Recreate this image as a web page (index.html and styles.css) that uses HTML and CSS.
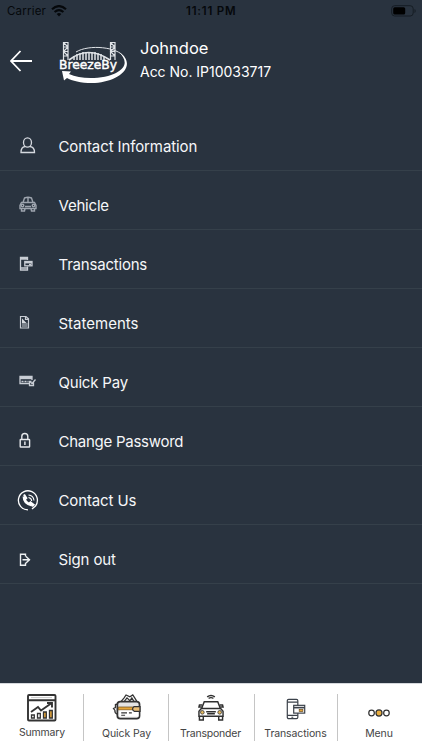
FILE: index.html
```html
<!DOCTYPE html>
<html lang="en">
<head>
<meta charset="utf-8">
<title>BreezeBy</title>
<link rel="stylesheet" href="styles.css">
</head>
<body>
<div class="app">
  <div class="status">
    <span class="carrier">Carrier</span>
    <svg class="wifi" width="16" height="12" viewBox="0 0 16 12"><g fill="none" stroke="#05080b" stroke-width="2.2"><path d="M1 4.2Q8-2 15 4.2"/><path d="M3.6 7Q8 3.2 12.4 7"/></g><path d="M5.7 9Q8 7 10.3 9L8 11.5Z" fill="#05080b"/></svg>
    <span class="time">11:11 PM</span>
    <svg class="battery" width="25" height="12" viewBox="0 0 25 12"><rect x=".7" y=".7" width="21.5" height="10.3" rx="3" fill="none" stroke="#161d24"/><rect x="2.2" y="2.2" width="12" height="7.3" rx="1.5" fill="#000"/><path d="M23.5 4v4q1.2-.5 1.2-2t-1.2-2" fill="#161d24"/></svg>
  </div>
  <header class="header">
    <svg class="back" width="23" height="22" viewBox="0 0 23 22"><path d="M10.5 1 1 11l9.500 10M1 11h21" fill="none" stroke="#fff" stroke-width="1.8"/></svg>
    <svg class="logo" width="70" height="46" viewBox="0 0 70 46">
      <g fill="none" stroke="#dfe3e7" stroke-width="1.200">
        <path d="M4.500 2v18M9 2v18M4 2.500h5.500M4 7h5.500M4 11.500h5.500M4 16h5.500M4.500 2.500l4.500 4.500-4.500 4.500 4.500 4.500M51.500 2v18M56 2v18M51 2.500h5.500M51 7h5.500M51 11.500h5.500M51 16h5.500M51.500 2.500l4.500 4.500-4.500 4.500 4.500 4.500"/>
        <path d="M10 20Q29 5 51 20" stroke-width="1.700"/>
        <path d="M15 16v4M18 14v6M21 13v7M24 12v8M27 12v8M30 12v8M33 12v8M36 12v8M39 13v7M42 14v6M45 16v4" stroke-width="1.500"/>
        <path d="M17 12C30 4 59 7 65 17" stroke-width="1"/>
      </g>
      <path d="M60 12C79 25 61 41.500 36 43 24 43.500 13 41 8 38L5 40.500 3 31 12 31.500 10 34C23 40.500 47 38.500 57 33 68 27.500 68 20 60 12Z" fill="#fff"/>
      <text class="logo-text" x="0" y="28.500" textLength="58" lengthAdjust="spacingAndGlyphs">BreezeBy</text>
    </svg>
    <div class="account"><div class="name">Johndoe</div><div class="number">Acc No. IP10033717</div></div>
  </header>
  <nav class="menu">
    <a class="row"><svg class="icon" viewBox="0 0 24 24"><g fill="none" stroke="#d5d9df" stroke-width="1.300"><ellipse cx="11.500" cy="8.500" rx="4" ry="4.600"/><path d="M9 12.500q-4 .5-4 6h13.500q0-5.500-4.500-6"/></g></svg><span class="contact">Contact Information</span></a>
    <a class="row"><svg class="icon" viewBox="0 0 24 24"><g fill="none" stroke="#9da4ae" stroke-width="1.400"><path d="M7 9.500 8.500 5q3.500-1.500 7 0L17 9.500M12 4v5.500M5.500 9.500h13l1.500 3v3H4v-3ZM9 13.500h6"/><circle cx="6.500" cy="12.500" r="1.300"/><circle cx="17.500" cy="12.500" r="1.300"/><path d="M5.500 15.500v2.500h3l.5-2.500M15 15.500l.5 2.500h3v-2.500"/></g></svg><span class="vehicle">Vehicle</span></a>
    <a class="row"><svg class="icon" viewBox="0 0 24 24"><g fill="none" stroke="#c8cdd4" stroke-width="1.300"><path d="M11.500 8V5.500h-7v12.500h7v-3.500M4.500 7h7M4.500 16h7"/><rect x="8.800" y="9.500" width="7.200" height="4.300"/><path d="M9 10.500h7" stroke-width="1.800"/><path d="M13 12.500h2"/></g></svg><span class="transactions">Transactions</span></a>
    <a class="row"><svg class="icon" viewBox="0 0 24 24"><path d="M4.500 5.500h5.500l2.500 2.300v9.200h-8ZM9.500 5.500v2.800h3M6 15h5.500M6 13h5.500" fill="none" stroke="#c8cdd4" stroke-width="1.200"/><path d="m6 7.500 4.500 4.500H6Z" fill="#d7dbe0"/></svg><span class="statements">Statements</span></a>
    <a class="row"><svg class="icon" viewBox="0 0 24 24"><g fill="none" stroke="#c8cdd4" stroke-width="1.300"><path d="M13 13.500H4V6.500h12V10" /><path d="M4 8h12" stroke-width="2.400"/><path d="M5.500 11.500h7" stroke-dasharray="2 1"/><path d="M17.500 12v3.500h-4v-4h2M14.500 12l1.500 1.500 3.500-4"/></g></svg><span class="quick">Quick Pay</span></a>
    <a class="row"><svg class="icon" viewBox="0 0 24 24"><g fill="none" stroke="#e5e8eb" stroke-width="1.400"><path d="M5.800 10.500V7.500a3 3 0 0 1 6 0v3"/><rect x="4.200" y="10.500" width="9.400" height="7.500" rx=".5"/><path d="M8.900 12.500v3.500" stroke-width="1.500"/></g></svg><span class="password">Change Password</span></a>
    <a class="row"><svg class="icon low" viewBox="0 0 24 24"><g fill="none" stroke="#fff"><path d="M12 20.800A9.500 9.500 0 1 1 19.500 17L16 20" stroke-width="1.300"/><path d="M8 7.500q0 7 8 8.500" stroke-width="2.800"/><path d="m8 5.500 2.200 3.500-1.500 1.500M13 15l1.500-1.500 3 2.300-1.500 1.500" stroke-width="2.200"/><path d="M12.500 8.500q3 .5 3.200 3.500M12.500 6q5 .5 5.500 5.500" stroke-width="1.100"/></g></svg><span class="contact-us">Contact Us</span></a>
    <a class="row"><svg class="icon low" viewBox="0 0 24 24"><path d="M9.500 8.500V6.200h-5v11h5v-2.500M6.500 11.700h7.500M10 8.500l3.500 3.200-3.500 3.300" fill="none" stroke="#edf0f2" stroke-width="1.400"/></svg><span class="signout">Sign out</span></a>
  </nav>
  <footer class="tabs">
    <a class="tab summary"><svg width="30" height="28" viewBox="0 0 30 28"><g fill="none" stroke="#333" stroke-width="1.900"><rect x="1" y="1" width="27.500" height="25.500" rx="1" fill="#fff"/><path d="M1 6.200h27.500M4 18l7-5 3 3.500 10-7M20 9h5v4.500"/></g><path d="M4 3.600h21" stroke="#c9c9c9"/><g fill="#fff" stroke="#333" stroke-width="1.300"><path d="M4.500 21h2.800v3H4.500zM10.500 19.500h2.800V24h-2.800z"/><path d="M16.500 18h2.800v6h-2.800zM22.500 16.500h2.800V24h-2.800z" fill="#e5a63b"/></g></svg><span>Summary</span></a>
    <a class="tab quickpay"><svg width="30" height="28" viewBox="0 0 30 28"><g fill="#fff" stroke="#333" stroke-width="1.300"><path d="M5 21Q2 20 2.500 17L1 15l2-1v-3l4-1 5-6 2-3 4 2 3-2 2 3 3 5"/><path d="M12 8l3-4 3 3 2-3 3 5"/><rect x="5" y="8" width="23" height="17.500" rx="3" fill="#e4e4e4" stroke-width="1.800"/><path d="M6 13.500h22v3H6z" fill="#e5a63b" stroke="#72511f" stroke-width=".8"/><path d="M7 17h20v6.500H7z" stroke="none"/><path d="M28.500 13h-6q-3.500 2.500 0 5h6z" fill="#e9bd75"/><path d="M9 19.500h6M9 22h4M17 19.500h3" stroke-width="1.200"/></g></svg><span>Quick Pay</span></a>
    <a class="tab transponder"><svg width="30" height="28" viewBox="0 0 30 28"><g fill="none" stroke="#303030" stroke-width="1.500"><path d="M11 3q4-3 8 0M12.500 4.500q2.500-1.500 5 0" stroke-width="1.400"/><path d="m5.500 14.500 2.500-6.500h14l2.500 6.500M2.500 23v-5l2.500-3h20l2.500 3v5Z"/><path d="M5.500 13.500H2.500l.5-2h3M24.500 13.500h3l-.5-2h-3M3 23v4h4v-4M23 23v4h4v-4M10 18.500h10M11 20.500h8"/><g fill="#e4b95f" stroke-width=".8"><circle cx="6" cy="19" r="1.900"/><circle cx="24" cy="19" r="1.900"/></g></g></svg><span>Transponder</span></a>
    <a class="tab transfer"><svg width="22" height="24" viewBox="0 0 22 24"><g fill="#fff" stroke="#3b414a" stroke-width="1.300"><rect x="1.500" y="1.500" width="11.500" height="21" rx="1.500"/><path d="M1.500 4.500H13M1.500 19H13M6 21h2"/><rect x="8.500" y="8" width="12" height="8.500"/><path d="M8.500 10.500h12" stroke-width="1.800"/><rect x="14.500" y="12.500" width="4" height="2.200" fill="#e5a63b" stroke="#72511f" stroke-width=".8"/></g></svg><span>Transactions</span></a>
    <a class="tab more"><svg width="28" height="10" viewBox="0 0 28 10"><g fill="#fff" stroke="#303030" stroke-width="1.500"><circle cx="4.700" cy="5" r="3.500"/><circle cx="14" cy="5" r="3.800" fill="#e8ad3f"/><circle cx="23.300" cy="5" r="3.500"/></g></svg><span>Menu</span></a>
  </footer>
</div>
</body>
</html>
```
FILE: styles.css
```css
* { box-sizing: border-box; }
body { margin: 0; font-family: Inter, "Liberation Sans", sans-serif; background: #29333f; }
.app { width: 422px; height: 750px; display: flex; flex-direction: column; background: #29333f; overflow: hidden; }
.status { height: 22px; display: grid; grid-template-columns: 43px 141px 1fr 25px; align-items: center; padding: 0 6px 0 7px; font-size: 11.5px; line-height: 22px; color: #05080b; }
.carrier { letter-spacing: .2px; }
.wifi { margin-left: 1px; }
.time { font-weight: 600; letter-spacing: .8px; margin-left: -5px; }
.header { height: 90px; display: flex; align-items: flex-start; padding: 17px 0 0 10px; color: #fff; }
.back { margin-top: 11px; }
.logo { margin: 1px 0 0 26px; }
.logo-text { font: 13px "DejaVu Sans", sans-serif; fill: #fff; stroke: #fff; stroke-width: .45px; }
.account { margin-left: 11px; white-space: nowrap; }
.name { font-size: 16.5px; line-height: 18px; }
.number { font-size: 14px; line-height: 18px; margin-top: 6px; letter-spacing: -.02px; }
.menu { height: 571px; flex: none; }
.row { height: 59px; display: flex; align-items: center; padding: 12px 0 0 16px; border-bottom: 1px solid #35404a; color: #f6f7f9; font-size: 15px; line-height: 20px; }
.icon { width: 24px; height: 24px; margin-right: 18.5px; position: relative; top: -1px; }
.low { top: 0; }
.contact { letter-spacing: -.11px; }
.vehicle, .transactions, .quick { letter-spacing: -.2px; }
.password { letter-spacing: -.26px; }
.contact-us, .signout { letter-spacing: -.12px; }
.tabs { height: 67px; flex: none; display: grid; grid-template-columns: 84px 85px 86px 83px 84px; padding-top: 10px; background: #fff; border-top: 1px solid #d5d8dc; color: #444; }
.tab { height: 47px; display: flex; flex-direction: column; align-items: center; border-right: 1px solid #c5c5c5; font-size: 10.5px; line-height: 14px; white-space: nowrap; }
.tab span { letter-spacing: -.08px; }
.summary span { margin-top: 4px; letter-spacing: -.2px; }
.summary span, .summary svg { margin-left: 1px; }
.quickpay svg { margin-left: 2px; }
.quickpay span { margin-left: 1px; }
.quickpay span, .transponder span { margin-top: 6px; }
.transponder { padding-right: 2px; }
.transponder span { letter-spacing: -.2px; }
.transfer { padding: 4px 1px 0 0; }
.transfer span { margin-top: 7px; letter-spacing: -.12px; }
.more { border: 0; padding: 15px 2px 0 0; }
.more svg { margin-left: -1px; }
.more span { margin-top: 10px; }
```
